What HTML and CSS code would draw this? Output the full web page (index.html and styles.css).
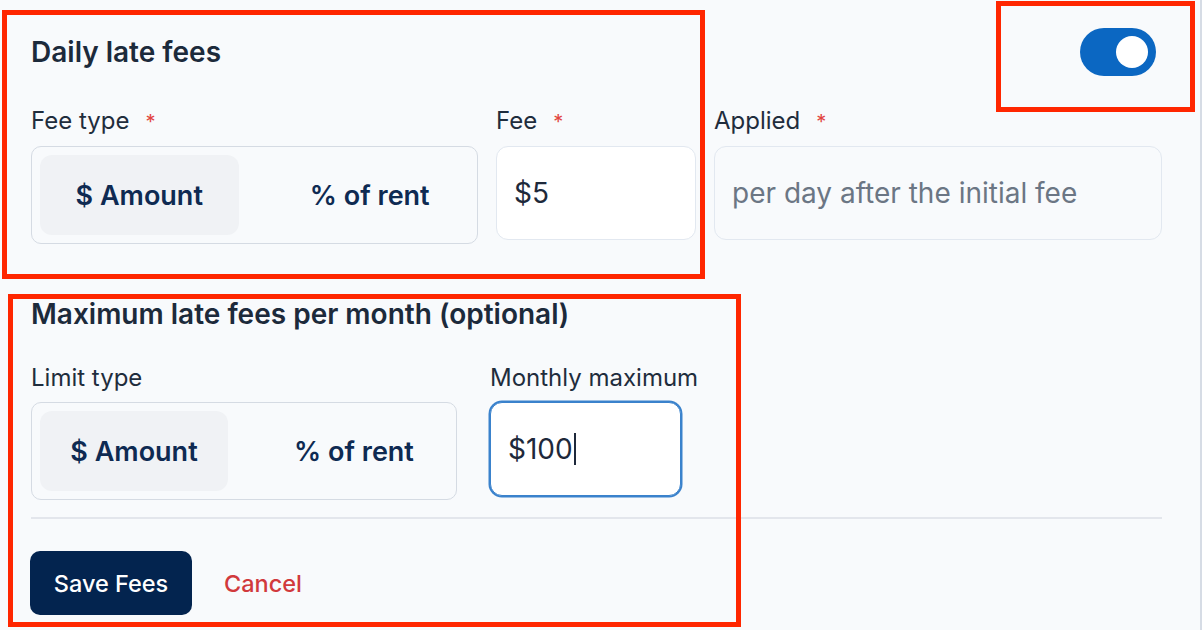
FILE: index.html
```html
<!DOCTYPE html>
<html lang="en">
<head>
<meta charset="utf-8">
<title>Late fees</title>
<link rel="stylesheet" href="styles.css">
</head>
<body>
<div class="card">
  <div class="card-header">
    <h2 class="section-title">Daily late fees</h2>
    <div class="toggle" role="switch" aria-checked="true"><span class="knob"></span></div>
  </div>

  <div class="fields-row daily">
    <div class="field">
      <div class="label">Fee type<span class="req">*</span></div>
      <div class="segmented">
        <div class="seg-option active">$ Amount</div>
        <div class="seg-option">% of rent</div>
      </div>
    </div>
    <div class="field">
      <div class="label">Fee<span class="req">*</span></div>
      <div class="input filled">$5</div>
    </div>
    <div class="field">
      <div class="label">Applied<span class="req">*</span></div>
      <div class="input readonly">per day after the initial fee</div>
    </div>
  </div>

  <h2 class="section-title max-title">Maximum late fees per month (optional)</h2>

  <div class="fields-row monthly">
    <div class="field">
      <div class="label">Limit type</div>
      <div class="segmented">
        <div class="seg-option active">$ Amount</div>
        <div class="seg-option">% of rent</div>
      </div>
    </div>
    <div class="field">
      <div class="label">Monthly maximum</div>
      <div class="input filled focused">$100<span class="caret"></span></div>
    </div>
  </div>

  <div class="divider"></div>

  <div class="actions">
    <button class="btn-primary">Save Fees</button>
    <button class="btn-link">Cancel</button>
  </div>
</div>

<div class="annot annot-daily"></div>
<div class="annot annot-toggle"></div>
<div class="annot annot-max"></div>
</body>
</html>
```

FILE: styles.css
```css
* { box-sizing: border-box; }

html, body {
  margin: 0;
  padding: 0;
}

body {
  width: 1202px;
  height: 630px;
  overflow: hidden;
  background: #f8fafc;
  font-family: Inter, "Noto Sans", sans-serif;
  color: #1e2b3b;
  position: relative;
}

.card {
  width: 1202px;
  height: 630px;
  border-right: 2px solid #d6dce5;
  padding: 28px 38px 0 31px;
}

.card-header {
  height: 48px;
  display: flex;
  align-items: center;
  justify-content: space-between;
}

.section-title {
  margin: 0;
  font-size: 28px;
  line-height: 32px;
  font-weight: 600;
  color: #1c2a3b;
}

.toggle {
  width: 76px;
  height: 48px;
  border-radius: 24px;
  background: #0b67c2;
  margin-right: 6px;
  display: flex;
  align-items: center;
  justify-content: flex-end;
  padding-right: 8px;
}

.knob {
  width: 32px;
  height: 32px;
  border-radius: 50%;
  background: #ffffff;
}

.fields-row {
  display: grid;
  align-items: start;
}

.fields-row.daily {
  margin-top: 31px;
  grid-template-columns: 447px 200px 1fr;
  column-gap: 18px;
}

.fields-row.monthly {
  margin-top: 34px;
  grid-template-columns: 426px 191px;
  column-gap: 33px;
}

.label {
  font-size: 24px;
  line-height: 28px;
  color: #1f2d3d;
  margin-bottom: 10px;
  white-space: nowrap;
}

.req {
  color: #e2453f;
  font-size: 20px;
  margin-left: 16px;
}

.segmented {
  height: 98px;
  border: 1.5px solid #d5dbe3;
  border-radius: 10px;
  padding: 8px;
  display: flex;
  gap: 32px;
}

.seg-option {
  flex: 1;
  height: 80px;
  border-radius: 12px;
  display: flex;
  align-items: center;
  justify-content: center;
  font-size: 27px;
  font-weight: 600;
  color: #0e2a52;
}

.seg-option.active {
  background: #f0f2f5;
}

.input {
  height: 94px;
  border: 1.5px solid #e2e8f0;
  border-radius: 12px;
  padding: 0 17px;
  display: flex;
  align-items: center;
  font-size: 28px;
  white-space: nowrap;
}

.input.filled {
  background: #ffffff;
  color: #1e293b;
}

.input.readonly {
  background: transparent;
  color: #6b7684;
}

.input.focused {
  border-color: #3a82cc;
  box-shadow: 0 0 0 1.5px #3a82cc;
}

.caret {
  display: inline-block;
  width: 2px;
  height: 32px;
  background: #1e293b;
  margin-left: 1px;
}

.max-title {
  margin-top: 54px;
}

.divider {
  height: 2px;
  background: #e3e6ec;
  margin-top: 17px;
}

.actions {
  margin-top: 32px;
  display: flex;
  align-items: center;
  gap: 32px;
}

.btn-primary {
  width: 162px;
  height: 64px;
  margin-left: -1px;
  border: none;
  border-radius: 10px;
  background: #03244f;
  color: #ffffff;
  font-family: Inter, "Noto Sans", sans-serif;
  font-size: 23.5px;
  font-weight: 500;
  padding: 0;
}

.btn-link {
  border: none;
  background: none;
  padding: 0;
  color: #d1393c;
  font-family: Inter, "Noto Sans", sans-serif;
  font-size: 23.5px;
  font-weight: 500;
}

.annot {
  position: absolute;
  border: 5px solid #ff2600;
  pointer-events: none;
}

.annot-daily {
  left: 2px;
  top: 10px;
  width: 703px;
  height: 269px;
}

.annot-toggle {
  left: 996px;
  top: 1px;
  width: 199px;
  height: 111px;
}

.annot-max {
  left: 8px;
  top: 294px;
  width: 733px;
  height: 333px;
}
```
